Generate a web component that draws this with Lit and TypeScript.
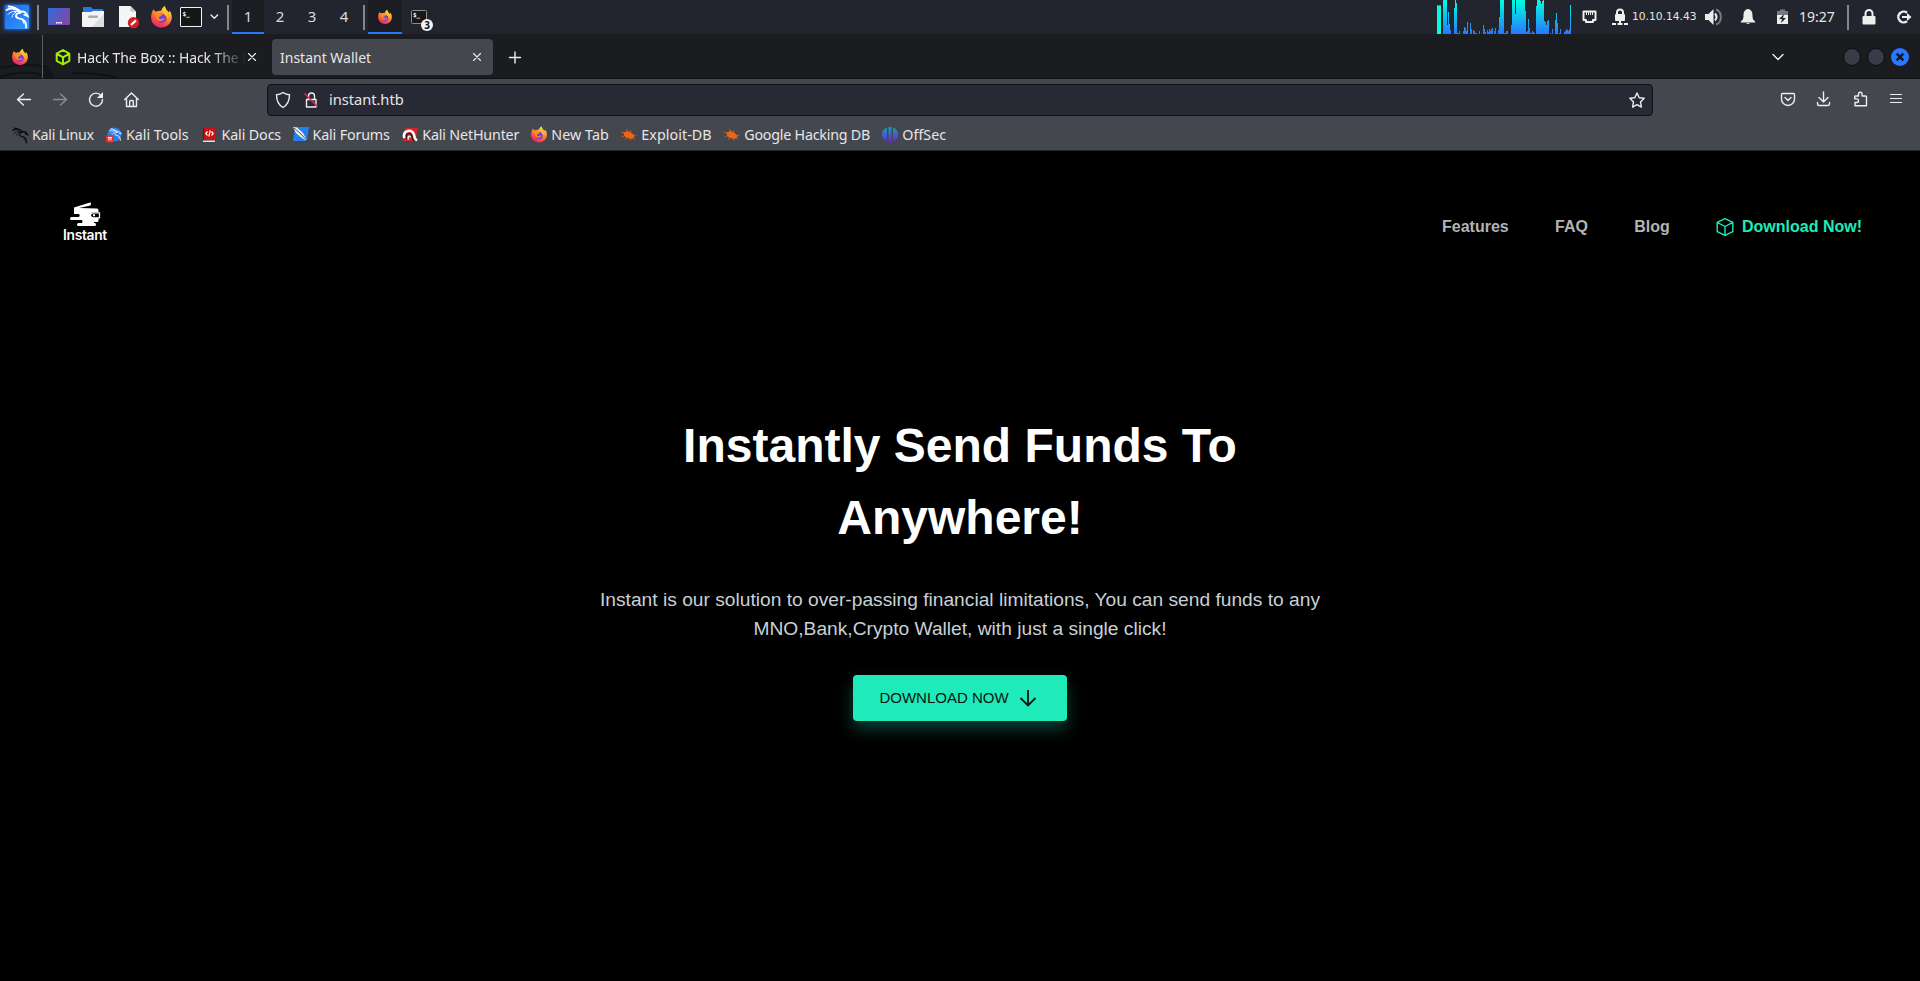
import { LitElement, html, svg, css } from 'lit';
import { customElement } from 'lit/decorators.js';

const base = css`
  :host { display: block; box-sizing: border-box; font-family: "Noto Sans", sans-serif; color: #e6e6e8; }
  * { box-sizing: border-box; }
  svg { display: block; flex: none; overflow: visible; }
  .line { fill: none; stroke: #eeeef0; stroke-width: 1.4; stroke-linecap: round; stroke-linejoin: round; }
  .thin { stroke-width: 1.1; }
  .fill { fill: #eeeeec; }
  .grow { flex: 1; }
`;

// A glyph drawn in the coordinates of its own bar: the viewBox starts at x.
const cell = (x: number, w: number, h: number, art: unknown) =>
  html`<svg width=${w} height=${h} viewBox="${x} 0 ${w} ${h}">${art}</svg>`;

const firefox = (cx: number, cy: number, r: number, id: string) => svg`
  <defs>
    <linearGradient id=${id} x1=".8" y1="0" x2=".3" y2="1">
      <stop offset="0" stop-color="#fff04a"/><stop offset=".35" stop-color="#ffa52a"/>
      <stop offset=".7" stop-color="#ff4f45"/><stop offset="1" stop-color="#e8226e"/>
    </linearGradient>
  </defs>
  <g transform="translate(${cx} ${cy}) scale(${r / 10})">
    <path fill="url(#${id})" d="M-7.6-7.4C-7-5.8-5.8-5.2-4.7-5.2-3-6-1.5-6.2-.4-5.8.2-7.8 1.5-9.5 3.3-10.4 3.7-7.4 5.6-6.1 7-4.4 7.4-5 7.5-5.6 7.3-6.5 9.3-4.3 10 -1.7 9.8 1 9.3 6.4 5.2 10 0 10-5.6 10-9.8 5.7-9.9.4-9.9-2.4-9-5.2-7.6-7.4Z"/>
    <circle cx=".2" cy="1.2" r="4.5" fill="#7542d6"/>
    <path fill="#ff8b25" d="M-7.2-2.8C-5.5-4.8-2.8-4.6-1.4-3.3H1.7C1.2-1.7-.6-1.2-1.8-.4-3.1.4-2.5 2.1-.9 2.2 1 2.3 1.5 1 3 1.3 1.8 4.7-4.2 5-5 .6Z"/>
    <path fill="#ffc93a" d="M1.9-6.4C3.8-3.9 6.3-2.4 6.1 1.7 5.5 0 4.8-1 3.3-2.2 2.1-3.2 1.5-4.4 1.9-6.4Z"/>
  </g>`;

const dragon = svg`
  <path fill="none" stroke-width="1.8" stroke-linecap="round" d="M1 5C5.500 2.500 11 3.700 15.500 7.300M3 1.500C7.400 1.800 12 3.600 15.500 7M14.500 7.500C17.500 5.200 20.400 7 22.200 11L18.800 9.600M14.800 7.800C9.500 7.800 9.200 12.600 13.400 13.300 18.500 13.900 21 16.800 20.600 22.500"/>
  <path fill="none" stroke-width="1" stroke-linecap="round" d="M2.500 9.500C5 6.600 8.500 6 12 6.500M6.500 12C7 9.500 8.500 8 10.500 7.300M17 15.500l1.500 3"/>`;

@customElement('desktop-panel')
class DesktopPanel extends LitElement {
  static styles = [base, css`
    :host { height: 36px; background: #23252e; border-bottom: 2px solid #1c1d22; }
    .bar { display: flex; height: 34px; }
    .ws { width: 32px; text-align: center; font-size: 15px; line-height: 33px; color: #d5dbe4; }
    .cur { background: #1b1d23; border-bottom: 2px solid #2777ff; }
    .task { width: 34px; margin-right: 5px; }
    .ip { width: 68px; font: 10.7px/34px "DejaVu Sans", sans-serif; padding-left: 2px; }
    .time { width: 40px; font-size: 14px; line-height: 34px; padding-left: 1px; }
    .badge { font: bold 10px "Noto Sans", sans-serif; text-anchor: middle; fill: #111; }
    .prompt { font: bold 6px "DejaVu Sans Mono", monospace; fill: #fff; }
  `];
  // [x, top] for each column of the CPU graph
  bars: number[][] = [[0,5],[1,5],[2,5],[3,5],[6,0],[7,0],[8,0],[9,0],[10,25],[11,12],[12,24],[13,30],[17,8],[18,0],[19,3],[20,33],[21,33],[22,31],
    [26,31],[27,27],[28,28],[29,31],[30,22],[33,23],[34,29],[36,30],[37,31],[38,33],[39,33],[42,31],[46,25],[47,29],[48,32],[50,30],[51,32],[52,29],[53,31],[54,29],[55,28],[57,31],[58,28],
    [61,30],[62,17],[63,0],[64,0],[65,0],[66,0],[67,33],[68,33],[69,31],[70,31],[74,25],[75,0],[76,0],[77,0],[78,14],[79,0],[80,0],[81,0],[82,0],[83,0],[84,0],[85,0],[86,0],[87,0],[88,11],
    [89,32],[90,31],[91,19],[92,28],[93,33],[94,33],[95,31],[96,32],[97,33],[99,6],[100,0],[101,0],[102,0],[103,1],[104,4],[105,1],[106,0],[107,21],[108,22],[109,25],[110,21],[111,20],[113,33],
    [115,29],[118,20],[119,13],[120,23],[122,33],[123,29],[127,32],[128,31],[129,29],[130,30],[131,31],[132,29],[133,5]];
  render() {
    return html`<div class="bar">
      ${cell(0, 44, 34, svg`
        <defs><linearGradient id="k" x2="1" y2="1"><stop stop-color="#2466e8"/><stop offset="1" stop-color="#2b9cff"/></linearGradient>
        <filter id="b" x="-30%" y="-30%" width="160%" height="160%"><feGaussianBlur stdDeviation="1.6"/></filter></defs>
        <rect x="4" y="4" width="26" height="26" rx="3" fill="#1f62dc" filter="url(#b)"/>
        <rect x="5" y="5" width="24" height="24" rx="1.5" fill="url(#k)"/>
        <g transform="translate(5.5 5)" stroke="#fff">${dragon}</g>
        <rect x="37" y="5" width="2" height="25" fill="#85868a"/>`)}
      ${cell(44, 33, 34, svg`
        <defs><linearGradient id="d" x2="1" y2=".5"><stop stop-color="#2f6be0"/><stop offset="1" stop-color="#7d4aa8"/></linearGradient></defs>
        <rect x="48" y="8" width="22" height="17" rx="1" fill="url(#d)"/><path stroke="#fff" stroke-width="1.5" stroke-dasharray="1.6 .6" d="M56 22.7h6.4"/>`)}
      ${cell(77, 34, 34, svg`
        <path fill="#2777e0" d="M83 7h8l2 2h10v7H83z"/><path fill="#f3f3f3" d="M82 12h9l2-1h11v15a1 1 0 0 1-1 1H83a1 1 0 0 1-1-1z"/>
        <path fill="#dedede" d="M104 14v13H92z"/><rect x="88" y="15.5" width="10" height="2.4" rx="1.2" fill="#a9a9a9"/>`)}
      ${cell(111, 36, 34, svg`
        <path fill="#f5f5f5" d="M119 6h11.500l5.500 5.500V27h-17z"/><path fill="#c4c4c4" d="M130.500 6l5.500 5.500h-5.500z"/>
        <circle cx="133.500" cy="22.700" r="5.700" fill="#d51d24"/><path stroke="#fff" stroke-width="2.200" d="M131 25l5-4.600"/>`)}
      ${cell(147, 29, 34, firefox(161.5, 17, 10.5, 'f1'))}
      ${cell(176, 56, 34, svg`
        <rect x="180.500" y="7.500" width="21" height="19" rx=".5" fill="#171717" stroke="#f2f2f2"/><text class="prompt" x="182.500" y="15.500">$_</text>
        <path class="line" d="M211 15l3.300 3.300 3.300-3.300"/><rect x="227" y="5" width="2" height="25" fill="#85868a"/>`)}
      <div class="ws cur">1</div><div class="ws">2</div><div class="ws">3</div><div class="ws">4</div>
      ${cell(360, 8, 34, svg`<rect x="363" y="5" width="2" height="25" fill="#85868a"/>`)}
      <div class="task cur">${cell(368, 34, 32, firefox(385, 17, 7, 'f2'))}</div>
      ${cell(407, 30, 34, svg`
        <rect x="411.500" y="10.500" width="15" height="13" rx="1" fill="#181818" stroke="#8c8c8c"/><text class="prompt" x="413" y="17">$_</text>
        <circle cx="427" cy="25" r="6" fill="#f4f4f4"/><text class="badge" x="427" y="28.700">3</text>`)}
      <div class="grow"></div>
      ${cell(1437, 142, 34, svg`
        <defs><linearGradient id="c" gradientUnits="userSpaceOnUse" x1="0" y1="0" x2="0" y2="34"><stop stop-color="#00ffdf"/><stop offset="1" stop-color="#2777ff"/></linearGradient></defs>
        ${this.bars.map(([x, y]) => svg`<rect x=${1437 + x} y=${y} width="1" height=${34 - y} fill=${x < 4 ? '#00ffdf' : 'url(#c)'}/>`)}
        <rect x="1437" y="5" width="4" height="1" fill="#12a99c"/>`)}
      ${cell(1579, 29, 34, svg`
        <path fill="none" stroke="#eeeeec" stroke-width="2" stroke-linejoin="round" d="M1583.500 11.500h12v8.500h-2.500v2h-7v-2h-2.500z"/><path stroke="#eeeeec" stroke-width="1" d="M1586.500 12v3M1588.500 12v3M1590.500 12v3M1592.500 12v3"/>`)}
      ${cell(1608, 22, 34, svg`
        <path fill="none" stroke="#eeeeec" stroke-width="2" d="M1617 15v-2.500a3 3 0 0 1 6 0V15"/><rect class="fill" x="1615" y="14" width="10" height="7" rx="1"/>
        <path fill="none" stroke="#eeeeec" stroke-width="2" d="M1612 24h4M1617.500 24h5M1624 24h4M1620 20v3"/>`)}
      <div class="ip">10.10.14.43</div>
      ${cell(1698, 32, 34, svg`
        <path class="fill" d="M1705 14h3.500l5-5v16l-5-5h-3.500z"/><path fill="none" stroke="#eeeeec" stroke-width="2" d="M1715 13.500q3 3.500 0 7"/>
        <path fill="none" stroke="#777980" stroke-width="2" d="M1716 9.500c6.500 2 6.500 13 0 15"/>`)}
      ${cell(1730, 38, 34, svg`<path class="fill" d="M1748 9c4 .5 4.500 4 4.500 7s.8 4 2.700 5.500v1h-14.400v-1c1.900-1.500 2.700-2.500 2.700-5.500s.5-6.500 4.500-7z"/><path class="fill" d="M1746 23h4q-2 2-4 0z"/>`)}
      ${cell(1768, 30, 34, svg`
        <path fill="#777980" d="M1780 9.500h5v1.500h3v5h-11v-5h3z"/><path class="fill" d="M1777 15h11v9h-11z"/><path fill="#23252e" d="M1784 14l-5 5h3l-1 4 5-5h-3z"/>`)}
      <div class="time">19:27</div>
      ${cell(1838, 82, 34, svg`
        <rect x="1847" y="5" width="2" height="25" fill="#85868a"/>
        <path fill="none" stroke="#eeeeec" stroke-width="2" d="M1865.500 17v-3.500a3.500 3.500 0 0 1 7 0V17"/><rect class="fill" x="1862.500" y="16" width="13" height="8.500" rx="1"/>
        <path fill="none" stroke="#eeeeec" stroke-width="2.400" d="M1907 12.700a5.400 5.400 0 1 0 0 8.600"/><path class="fill" d="M1902 16h5v-3l4.500 4-4.500 4v-3h-5z"/>`)}
    </div>`;
  }
}

@customElement('tab-strip')
class TabStrip extends LitElement {
  static styles = [base, css`
    :host { height: 43px; background: #1a1c20; border-bottom: 1px solid #111216; font-size: 14px; }
    .bar { display: flex; height: 42px; align-items: center; }
    .t { width: 170px; margin-right: -3px; padding-left: 1px; white-space: nowrap; line-height: 40px; padding-top: 1px; letter-spacing: -.1px;
      -webkit-mask-image: linear-gradient(90deg, #000 135px, transparent 170px); mask-image: linear-gradient(90deg, #000 135px, transparent 170px); }
    .tab { display: flex; width: 221px; height: 36px; border-radius: 4px; background: #44474d; justify-content: space-between; padding-left: 8px; line-height: 37px; margin: 0 0 1px 8px; }
    .htb { fill: none; stroke: #9fef00; stroke-width: 2; stroke-linejoin: round; }
  `];
  render() {
    return html`<div class="bar">
      ${cell(0, 76, 42, svg`
        <path fill="none" stroke="#101216" stroke-width="2" d="M0 32C16 28 34 28 47 31L53 42M0 41C18 35 36 35 50 42M72 37C88 37 105 38 117 42"/>
        <path fill="#121419" d="M42 29h5l7 13h-7z"/>
        ${firefox(20, 21, 8, 'f3')}
        <rect x="42" y="-1" width="1" height="43" fill="#5b5d61"/>
        <path class="htb" d="M63 14l6.300 3.600v7.200L63 28.400l-6.300-3.600v-7.200zM56.700 17.600L63 21.300l6.300-3.700M63 21.300v7"/>`)}
      <div class="t">Hack The Box :: Hack The E</div>
      ${cell(243, 21, 42, svg`<path class="line thin" d="M248.500 17.500l7 7M255.500 17.500l-7 7"/>`)}
      <div class="tab"><span>Instant Wallet</span>${cell(468, 25, 36, svg`<path class="line thin" d="M473.500 14.500l7 7M480.500 14.500l-7 7"/>`)}</div>
      ${cell(493, 40, 42, svg`<path class="line" d="M509.500 21.500h11M515 16v11"/>`)}
      <div class="grow"></div>
      ${cell(1760, 160, 42, svg`
        <path class="line" d="M1773 18.500l5 5 5-5"/>
        <circle cx="1852" cy="21" r="8.500" fill="#383c47" stroke="#0b0c0f"/><circle cx="1876" cy="21" r="8.500" fill="#383c47" stroke="#0b0c0f"/>
        <circle cx="1900" cy="21" r="9" fill="#2777ff"/><path stroke="#15171c" stroke-width="2.400" d="M1896.700 17.700l6.600 6.600M1903.300 17.700l-6.600 6.600"/>`)}
    </div>`;
  }
}

@customElement('nav-toolbar')
class NavToolbar extends LitElement {
  static styles = [base, css`
    :host { height: 41px; background: #44474d; font-size: 14.7px; }
    .bar { display: flex; height: 41px; align-items: center; }
    .url { flex: 1; display: flex; height: 32px; line-height: 29px; background: #272935; border: 1px solid #0f1015; border-radius: 4px; }
    .url span { padding-left: 1px; letter-spacing: -.05px; }
    .dim { stroke: #8b8d92; }
  `];
  render() {
    return html`<div class="bar">
      ${cell(0, 267, 41, svg`
        <path class="line" d="M30.500 20.500H18M23.500 15l-6 5.500 6 5.500"/><path class="line dim" d="M53.500 20.500H66M60.500 15l6 5.500-6 5.500"/>
        <path class="line" d="M101 16.500a6.500 6.500 0 1 0 1.500 4"/><path class="fill" d="M103 13v6h-6z"/>
        <path class="line" d="M124.700 20.500L131.500 14l6.800 6.500M126.500 19.500v8h10v-8M129.700 27v-4.500a1 1 0 0 1 1-1h1.600a1 1 0 0 1 1 1V27"/>`)}
      <div class="url">
        ${cell(268, 60, 30, svg`
          <path class="line" d="M283 7.500q3 2 6.500 2.300 0 9-6.500 12.700-6.500-3.700-6.500-12.700 3.500-.3 6.500-2.300z"/>
          <path class="line" d="M306.500 14.500h9.500v7.500h-9.500zM308.500 14v-3a3 3 0 0 1 6 0v3"/><path stroke="#e22850" stroke-width="1.500" d="M304.500 8.500l13 13"/>`)}
        <span>instant.htb</span><div class="grow"></div>
        ${cell(1625, 27, 30, svg`<path class="line" d="M1637 8l2.200 4.700 5 .6-3.700 3.600.9 5.200-4.400-2.500-4.400 2.500.9-5.200-3.700-3.600 5-.6z"/>`)}
      </div>
      ${cell(1653, 267, 41, svg`
        <path class="line" d="M1782.500 14.500h11a1 1 0 0 1 1 1V20a6.500 6.500 0 0 1-13 0v-4.500a1 1 0 0 1 1-1zM1785 18.500l3 3 3-3"/>
        <path class="line" d="M1823.500 13v9.500M1819 18.500l4.500 4.500 4.500-4.500M1817.500 23.500v1.500a1.500 1.500 0 0 0 1.500 1.500h9a1.500 1.500 0 0 0 1.500-1.500v-1.500"/>
        <path class="line" d="M1855.500 17h3v-2a1.800 1.800 0 0 1 3.600 0v2h3.400a1 1 0 0 1 1 1v8.700h-11.500v-3.200h1.700a1.800 1.800 0 0 0 0-3.600h-2v-1.900a1 1 0 0 1 .8-1z"/>
        <path class="line thin" d="M1890.500 15.500h11M1890.500 19.500h11M1890.500 23.500h11"/>`)}
    </div>`;
  }
}

const bug = svg`<path fill="#ef6414" d="M2.500 5.500l4-1.500 3.500 1.500 3 2.500.5 2-1.500 1.500-3 .2L5 10.500 3 8.500z"/><path fill="none" stroke="#e8640f" stroke-width=".7" d="M0 5l4 1.500M5.500 2l1.500 3M.5 10l4-1.500M4 13l2.500-3M9.500 13.500V11M15.500 8L12 9M14 12.500l-2-2M9.500 3v3"/>`;

@customElement('bookmark-bar')
class BookmarkBar extends LitElement {
  static styles = [base, css`
    :host { height: 31px; background: #44474d; border-bottom: 1px solid #232429; font-size: 14.3px; }
    .bar { display: flex; height: 29px; align-items: center; padding-left: 12px; }
    .bm { display: flex; align-items: center; gap: 4px; white-space: nowrap; flex: none; line-height: 29px; }
  `];
  // [label, distance to the next bookmark, letter spacing, icon]
  items: [string, number, number, unknown][] = [
    ['Kali Linux', 94, -.25, svg`<g stroke="#0c0c0e" transform="scale(.7)">${dragon}</g>`],
    ['Kali Tools', 95.5, -.02, svg`<circle cx="8.500" cy="7.500" r="7" fill="#2b7de9"/><g stroke="#d8ecff" transform="translate(3 1) scale(.55)">${dragon}</g><rect y="8" width="8" height="7.500" rx="2" fill="#e5322d"/><path stroke="#fff" d="M2 10.500h4M3 10.500v3M5 10.500v3"/>`],
    ['Kali Docs', 91, -.13, svg`<path fill="#1d2a4a" d="M1 1h4v14H1z"/><path fill="#cc1212" d="M2 0h11v13H2z"/><path fill="#e9dcdc" d="M1 13.500h12V15H1z"/><path fill="none" stroke="#fff" stroke-width="1.200" d="M5.500 4.500L3.800 6.500l1.700 2M9.500 4.500l1.700 2-1.700 2M8.300 3.500l-1.500 6"/>`],
    ['Kali Forums', 109.8, -.16, svg`<path fill="#2380ee" d="M2 0h14l-2 14H0z"/><path fill="#f2f2f2" d="M0 0l4 .5 6 5.500 4 7.500-2-.5-5-3.500L3 6z"/><path fill="none" stroke="#222" stroke-width=".8" d="M1 1l7 6 7 8"/>`],
    ['Kali NetHunter', 129, -.18, svg`<path fill="#d8222b" d="M3 1h13l-3 13H1z"/><path fill="none" stroke="#fff" stroke-width="2.600" d="M2.500 11C0 4 9 1.500 11.500 6.500S11 11 15 13.500"/><path fill="none" stroke="#161719" stroke-width="1.200" d="M5 12C2.500 7 8 4.500 9.500 8s0 4 3 6"/><path fill="none" stroke="#fff" stroke-width="1.400" d="M6.500 12.500C5 9 8 8 8.500 10.500"/>`],
    ['New Tab', 90, .05, firefox(8, 7.5, 8, 'f4')],
    ['Exploit-DB', 103, .05, bug],
    ['Google Hacking DB', 158, -.24, bug],
    ['OffSec', 90, 0, svg`<defs><linearGradient id="o" x2="0" y2="1"><stop stop-color="#159fb5"/><stop offset="1" stop-color="#6826cf"/></linearGradient></defs><path fill="url(#o)" d="M5 .5v14A8 7.500 0 0 1 5 .5zM6.500 0h3v15.500h-3zM11 .5v14A8 7.500 0 0 0 11 .5z"/>`],
  ];
  render() {
    return html`<div class="bar">${this.items.map(([t, w, s, i]) => html`
      <div class="bm" style="width:${w}px;letter-spacing:${s}px"><svg width="16" height="15" viewBox="0 0 16 15">${i}</svg><span>${t}</span></div>`)}</div>`;
  }
}

@customElement('wallet-page')
class WalletPage extends LitElement {
  static styles = [base, css`
    :host { height: 830px; background: #000; font-family: "Liberation Sans", Arial, sans-serif; }
    header { display: flex; align-items: flex-start; justify-content: space-between; padding: 51px 58px 0 62px; height: 101px; }
    .logo { width: 46px; text-align: center; color: #fff; font: 600 13.8px/15px Inter, sans-serif; letter-spacing: -.3px; }
    .logo svg { margin: 0 auto 2px; }
    nav { display: flex; align-items: center; gap: 46.300px; font-weight: 700; font-size: 16px; line-height: 50px; color: #b3b3b3; }
    .dl { display: flex; align-items: center; gap: 8px; color: #1eebb9; }
    main { display: flex; flex-direction: column; align-items: center; padding-top: 158px; text-align: center; }
    h1 { margin: 0; width: 740px; font-size: 48px; line-height: 72px; color: #fff; }
    p { margin: 32px 0 0; width: 740px; font-size: 19.2px; line-height: 28.8px; color: #c9d1d6; }
    .btn { display: flex; align-items: center; justify-content: center; gap: 10px; margin-top: 31px; width: 214px; height: 46px; padding: 0 4px 0 0; border: 0; border-radius: 4px;
      background: #1eebb9; color: #0a1512; font: 15px "Liberation Sans", Arial, sans-serif; box-shadow: 0 8px 16px rgba(30, 235, 185, .28); white-space: nowrap; }
  `];
  render() {
    return html`
      <header>
        <div class="logo">
          <svg width="30" height="24" viewBox="0 0 30 24">
            <path fill="#fff" d="M4 5.500L20 .500q1-.3 1 1L20.500 3.500 9 6l18 .5q1.500 0 1.500 2V10h-5q-3 0-3 3t3 3h5v2.500q0 1.500-1.500 1.500h-3v1h1q1 0 1 1.500t-1.500 1.500H8.500a1.500 1.500 0 0 1 0-3H12q1-1.500 0-3H1.500a1.500 1.500 0 0 1 0-3H9q1.500-1.500 0-3H4z"/>
            <path fill="none" stroke="#fff" stroke-width="1.200" d="M28 10.800h1.500v5H23q-2.500-.3-2.500-2.500t2.500-2.500z"/><path stroke="#fff" stroke-width="2" d="M23 13.300h2"/>
          </svg>Instant</div>
        <nav><span>Features</span><span>FAQ</span><span>Blog</span>
          <span class="dl"><svg width="18" height="18" viewBox="0 0 18 18"><path fill="none" stroke="#1eebb9" stroke-width="1.400" stroke-linejoin="round" d="M9 .6l7.800 3.700v9.400L9 17.400l-7.800-3.700V4.300zM1.200 4.300L9 8.500l7.800-4.200M9 8.500v8.900"/></svg>Download Now!</span>
        </nav>
      </header>
      <main>
        <h1>Instantly Send Funds To Anywhere!</h1>
        <p>Instant is our solution to over-passing financial limitations, You can send funds to any MNO,Bank,Crypto Wallet, with just a single click!</p>
        <button class="btn">DOWNLOAD NOW
          <svg width="18" height="18" viewBox="0 0 18 18"><path fill="none" stroke="#0a1512" stroke-width="1.800" d="M9 1v15.500M1.500 9l7.500 7.500L16.500 9"/></svg>
        </button>
      </main>`;
  }
}

@customElement('app-root')
class AppRoot extends LitElement {
  static styles = css`:host { display: block; width: 1920px; height: 981px; overflow: hidden; background: #000; }`;
  render() {
    return html`<desktop-panel></desktop-panel><tab-strip></tab-strip><nav-toolbar></nav-toolbar><bookmark-bar></bookmark-bar><wallet-page></wallet-page>`;
  }
}
